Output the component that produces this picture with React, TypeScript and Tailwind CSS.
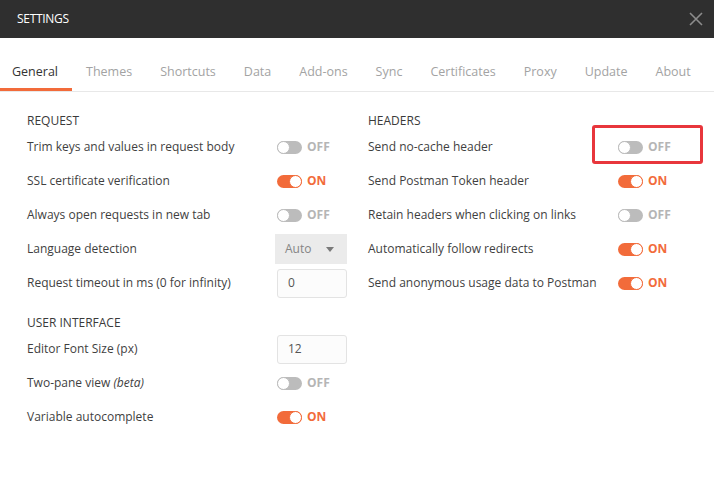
import React from "react";

const font = { fontFamily: '"Open Sans", "Noto Sans", Arial, sans-serif' };

function Toggle({ on }: { on: boolean }) {
  return (
    <div className="flex items-center">
      {on ? (
        <div className="w-[25px] h-[13px] rounded-full bg-[#f26b3a] flex justify-end items-center">
          <div className="w-[13px] h-[13px] rounded-full bg-white border border-[#f26b3a]" />
        </div>
      ) : (
        <div className="w-[25px] h-[13px] rounded-full bg-[#bcbcbc] flex justify-start items-center">
          <div className="w-[13px] h-[13px] rounded-full bg-white border border-[#bcbcbc]" />
        </div>
      )}
      <span
        className={
          on
            ? "ml-[5px] text-[12px] font-bold text-[#f26b3a] leading-none"
            : "ml-[5px] text-[12px] font-bold text-[#b5b5b5] leading-none"
        }
      >
        {on ? "ON" : "OFF"}
      </span>
    </div>
  );
}

function Row({ label, children }: { label: React.ReactNode; children: React.ReactNode }) {
  return (
    <div className="h-[34px] flex items-center">
      <div className="w-[250px] text-[12px] text-[#3f3f3f]">{label}</div>
      <div className="flex-1">{children}</div>
    </div>
  );
}

function Header({ children, className = "" }: { children: React.ReactNode; className?: string }) {
  return (
    <div className={"h-[18px] flex items-center text-[12px] text-[#3a3a3a] font-medium " + className}>
      {children}
    </div>
  );
}

export default function App() {
  const tabs = ["General", "Themes", "Shortcuts", "Data", "Add-ons", "Sync", "Certificates", "Proxy", "Update", "About"];
  return (
    <div className="w-[714px] h-[477px] bg-white relative overflow-hidden" style={font}>
      <div className="h-[38px] bg-[#2f2f2f] flex items-center justify-between pl-[17px] pr-[11px]">
        <span className="text-white text-[12px] tracking-[-0.3px]">SETTINGS</span>
        <svg width="14" height="14" viewBox="0 0 14 14">
          <path d="M1 1 L13 13 M13 1 L1 13" stroke="#8c8c8c" strokeWidth="1.6" />
        </svg>
      </div>
      <div className="mt-[16px] border-b border-[#e8e8e8] flex">
        <div className="flex -ml-[2px]">
          {tabs.map((t, i) => (
            <div
              key={t}
              className={
                i === 0
                  ? "relative h-[37px] px-[14px] flex items-center pb-[1px] whitespace-nowrap text-[12.5px] text-[#333333]"
                  : "relative h-[37px] px-[14px] flex items-center pb-[1px] whitespace-nowrap text-[12.5px] text-[#a3a3a3]"
              }
            >
              {t}
              {i === 0 && <div className="absolute left-[2px] right-0 bottom-0 h-[3px] bg-[#f26b3a]" />}
            </div>
          ))}
        </div>
      </div>
      <div className="flex pl-[27px] pt-[20px]">
        <div className="w-[341px]">
          <Header>REQUEST</Header>
          <Row label="Trim keys and values in request body">
            <Toggle on={false} />
          </Row>
          <Row label="SSL certificate verification">
            <Toggle on={true} />
          </Row>
          <Row label="Always open requests in new tab">
            <Toggle on={false} />
          </Row>
          <Row label="Language detection">
            <div className="-ml-[2px] w-[72px] h-[30px] bg-[#ebebeb] flex items-center justify-between pl-[10px] pr-[13px] text-[12px] text-[#858585]">
              <span>Auto</span>
              <svg width="8" height="5" viewBox="0 0 8 5">
                <path d="M0 0 L8 0 L4 5 Z" fill="#7a7a7a" />
              </svg>
            </div>
          </Row>
          <Row label="Request timeout in ms (0 for infinity)">
            <div className="w-[70px] h-[29px] border border-[#e3e3e3] rounded-[3px] bg-[#fcfcfc] flex items-center pl-[10px] text-[12px] text-[#555555]">
              0
            </div>
          </Row>
          <Header className="mt-[14px]">USER INTERFACE</Header>
          <Row label="Editor Font Size (px)">
            <div className="w-[70px] h-[29px] border border-[#e3e3e3] rounded-[3px] bg-[#fcfcfc] flex items-center pl-[10px] text-[12px] text-[#555555]">
              12
            </div>
          </Row>
          <Row
            label={
              <span>
                Two-pane view <i>(beta)</i>
              </span>
            }
          >
            <Toggle on={false} />
          </Row>
          <Row label="Variable autocomplete">
            <Toggle on={true} />
          </Row>
        </div>
        <div className="w-[340px] relative">
          <Header>HEADERS</Header>
          <Row label="Send no-cache header">
            <Toggle on={false} />
          </Row>
          <Row label="Send Postman Token header">
            <Toggle on={true} />
          </Row>
          <Row label="Retain headers when clicking on links">
            <Toggle on={false} />
          </Row>
          <Row label="Automatically follow redirects">
            <Toggle on={true} />
          </Row>
          <Row label="Send anonymous usage data to Postman">
            <Toggle on={true} />
          </Row>
          <div className="absolute left-[224px] top-[13px] w-[111px] h-[39px] border-[3px] border-[#e8363c] rounded-[3px]" />
        </div>
      </div>
    </div>
  );
}
